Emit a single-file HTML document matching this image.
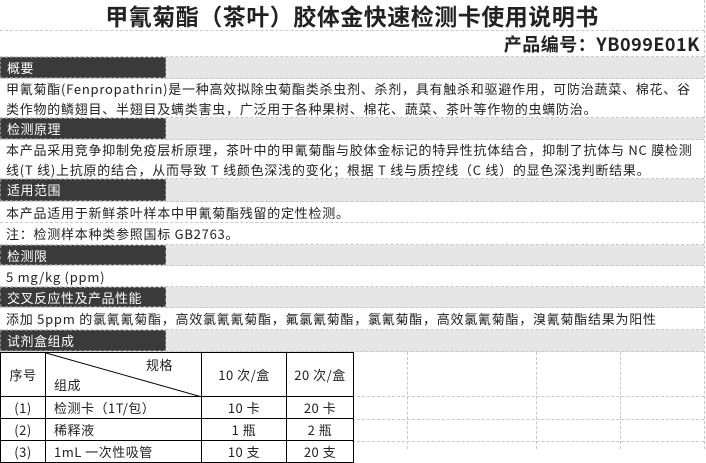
<!DOCTYPE html>
<html><head><meta charset="utf-8"><style>
body{margin:0;width:706px;height:449px;overflow:hidden;background:#fff;font-family:"Noto Sans CJK SC","Liberation Sans",sans-serif;color:#222;position:relative}
.r{position:absolute;left:0;width:704px;border-bottom:1px dashed #c8c8c8;box-sizing:border-box}
.h{background:#e6e6e6}
.h span{position:absolute;left:0;top:0;bottom:0;width:166px;background:#3a3a3a;color:#fff;font-size:13px;padding-left:6px;box-sizing:border-box;line-height:20px;border:1px dashed #888;letter-spacing:0.5px}
.t{font-size:13px;padding-left:6px;line-height:20px;white-space:nowrap;letter-spacing:0.75px}
.vl{position:absolute;right:1px;top:0;height:449px;border-left:1px dashed #c8c8c8}
table{position:absolute;left:0;top:352px;border-collapse:collapse;font-size:13px;letter-spacing:0.5px}
td{border:1px solid #000;text-align:center;height:21px;padding:0;line-height:18px}
.gv{position:absolute;top:352px;height:97px;border-left:1px dashed #c8c8c8}
.gh{position:absolute;left:352px;width:352px;border-top:1px dashed #c8c8c8}
</style></head><body>
<div class="vl"></div>
<div class="r" style="top:0;height:31px;text-align:center;font-weight:bold;font-size:23px;line-height:30px;padding-left:0;letter-spacing:0.5px">甲氰菊酯（茶叶）胶体金快速检测卡使用说明书</div>
<div class="r" style="top:31px;height:26px;text-align:right;font-weight:bold;font-size:18px;line-height:27px;padding-right:4px;letter-spacing:0.5px">产品编号：YB099E01K</div>
<div class="r h" style="top:57px;height:22px"><span>概要</span></div>
<div class="r t" style="top:79px;height:39px">甲氰菊酯(Fenpropathrin)是一种高效拟除虫菊酯类杀虫剂、杀剂，具有触杀和驱避作用，可防治蔬菜、棉花、谷<br>类作物的鳞翅目、半翅目及螨类害虫，广泛用于各种果树、棉花、蔬菜、茶叶等作物的虫螨防治。</div>
<div class="r h" style="top:118px;height:22px"><span>检测原理</span></div>
<div class="r t" style="top:140px;height:39px">本产品采用竞争抑制免疫层析原理，茶叶中的甲氰菊酯与胶体金标记的特异性抗体结合，抑制了抗体与 NC 膜检测<br>线(T 线)上抗原的结合，从而导致 T 线颜色深浅的变化；根据 T 线与质控线（C 线）的显色深浅判断结果。</div>
<div class="r h" style="top:179px;height:23px"><span>适用范围</span></div>
<div class="r t" style="top:202px;height:21px;line-height:21px">本产品适用于新鲜茶叶样本中甲氰菊酯残留的定性检测。</div>
<div class="r t" style="top:223px;height:22px;line-height:22px">注：检测样本种类参照国标 GB2763。</div>
<div class="r h" style="top:245px;height:21px"><span>检测限</span></div>
<div class="r t" style="top:266px;height:21px;line-height:21px">5 mg/kg (ppm)</div>
<div class="r h" style="top:287px;height:21px"><span>交叉反应性及产品性能</span></div>
<div class="r t" style="top:308px;height:22px;line-height:22px">添加 5ppm 的氯氰氰菊酯，高效氯氰氰菊酯，氟氯氰菊酯，氯氰菊酯，高效氯氰菊酯，溴氰菊酯结果为阳性</div>
<div class="r h" style="top:330px;height:22px"><span>试剂盒组成</span></div>
<div class="gv" style="left:407px"></div><div class="gv" style="left:536px"></div><div class="gv" style="left:620px"></div>
<div class="gh" style="top:396px"></div><div class="gh" style="top:419px"></div><div class="gh" style="top:441px"></div>
<table>
<tr><td style="width:44px;height:43px">序号</td><td style="width:155px;position:relative;text-align:left"><svg style="position:absolute;left:0;top:0" width="156" height="44"><line x1="0" y1="0" x2="156" y2="44" stroke="#000"/></svg><div style="position:absolute;right:28px;top:3px">规格</div><div style="position:absolute;left:8px;bottom:2px">组成</div></td><td style="width:84px">10 次/盒</td><td style="width:66px">20 次/盒</td></tr>
<tr><td>(1)</td><td style="text-align:left;padding-left:8px">检测卡（1T/包）</td><td>10 卡</td><td>20 卡</td></tr>
<tr><td>(2)</td><td style="text-align:left;padding-left:8px">稀释液</td><td>1 瓶</td><td>2 瓶</td></tr>
<tr><td>(3)</td><td style="text-align:left;padding-left:8px">1mL 一次性吸管</td><td>10 支</td><td>20 支</td></tr>
</table>
</body></html>
